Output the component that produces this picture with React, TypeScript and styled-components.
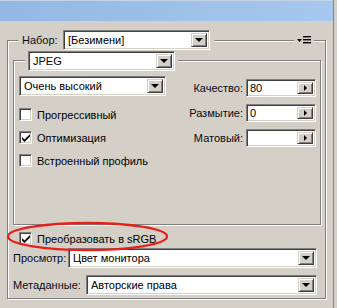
import React from "react";
import styled, { createGlobalStyle } from "styled-components";

const Global = createGlobalStyle`
  html, body { margin: 0; padding: 0; }
  body {
    width: 337px; height: 308px; overflow: hidden;
    background: #d4d0c8;
    font-family: "Liberation Sans", Arial, sans-serif;
    font-size: 11px; color: #000;
  }
`;

const Page = styled.div`
  display: flex;
  width: 337px;
  height: 308px;
  position: relative;
`;

const Main = styled.div`
  width: 333px;
  display: flex;
  flex-direction: column;
`;

const RightEdge = styled.div`
  width: 3px;
  border-left: 1px solid #8a8780;
  background: #d4d0c8;
`;

const TitleBar = styled.div`
  height: 21px;
  background: linear-gradient(90deg, #94b8e4 0%, #a6c8ee 100%);
  border-top: 1px solid #c4d4e6;
  box-sizing: border-box;
`;

const Group = styled.div<{ $mt: number; $ml: number; $w: number; $h: number }>`
  box-sizing: border-box;
  margin-top: ${(p) => p.$mt}px;
  margin-left: ${(p) => p.$ml}px;
  width: ${(p) => p.$w}px;
  height: ${(p) => p.$h}px;
  border: 1px solid #808080;
  box-shadow: inset 1px 1px 0 #fff, 1px 1px 0 #fff;
  display: flex;
  flex-direction: column;
  flex-shrink: 0;
`;

const GroupHead = styled.div<{ $mt: number; $pl: number; $pr: number }>`
  margin-top: ${(p) => p.$mt}px;
  padding: 0 ${(p) => p.$pr}px 0 ${(p) => p.$pl}px;
  display: flex;
  align-items: center;
  justify-content: space-between;
`;

const Mask = styled.div<{ $pl: number; $pr: number }>`
  background: #d4d0c8;
  display: flex;
  align-items: center;
  padding: 0 ${(p) => p.$pr}px 0 ${(p) => p.$pl}px;
  height: 20px;
`;

const Label = styled.span<{ $w?: number; $right?: boolean }>`
  display: inline-block;
  flex-shrink: 0;
  width: ${(p) => (p.$w ? `${p.$w}px` : "auto")};
  text-align: ${(p) => (p.$right ? "right" : "left")};
  white-space: nowrap;
  color: #0a0a14;
`;

const SelectBox = styled.div<{ $w: number }>`
  box-sizing: border-box;
  width: ${(p) => p.$w}px;
  height: 20px;
  background: #fff;
  border: 1px solid;
  border-color: #808080 #fff #fff #808080;
  box-shadow: inset 1px 1px 0 #404040, inset -1px -1px 0 #d4d0c8;
  display: flex;
  align-items: stretch;
  padding: 2px;
`;

const SelectText = styled.div`
  flex: 1;
  display: flex;
  align-items: center;
  padding-left: 2px;
  white-space: nowrap;
  overflow: hidden;
`;

const DropBtn = styled.div`
  box-sizing: border-box;
  width: 16px;
  background: #d4d0c8;
  border: 1px solid;
  border-color: #d4d0c8 #404040 #404040 #d4d0c8;
  box-shadow: inset 1px 1px 0 #fff, inset -1px -1px 0 #808080;
  display: flex;
  align-items: center;
  justify-content: center;
`;

const DownArrow = styled.div`
  width: 0; height: 0;
  border-left: 4px solid transparent;
  border-right: 4px solid transparent;
  border-top: 4px solid #000;
`;

const RightArrow = styled.div`
  width: 0; height: 0;
  border-top: 3px solid transparent;
  border-bottom: 3px solid transparent;
  border-left: 3px solid #000;
`;

const Body = styled.div<{ $pt: number; $pl: number; $pr: number }>`
  display: flex;
  padding: ${(p) => p.$pt}px ${(p) => p.$pr}px 0 ${(p) => p.$pl}px;
  justify-content: space-between;
`;

const Column = styled.div<{ $gap: number; $pt: number }>`
  display: flex;
  flex-direction: column;
  gap: ${(p) => p.$gap}px;
  padding-top: ${(p) => p.$pt}px;
`;

const CheckList = styled.div`
  display: flex;
  flex-direction: column;
  gap: 10px;
  margin-top: 12px;
`;

const CheckRow = styled.div`
  display: flex;
  align-items: center;
  gap: 5px;
  height: 13px;
  white-space: nowrap;
`;

const Check = styled.div`
  box-sizing: border-box;
  width: 13px;
  height: 13px;
  background: #fff;
  border: 1px solid;
  border-color: #808080 #fff #fff #808080;
  box-shadow: inset 1px 1px 0 #404040, inset -1px -1px 0 #d4d0c8;
  display: flex;
  align-items: center;
  justify-content: center;
`;

const FieldRow = styled.div`
  display: flex;
  align-items: center;
  gap: 3px;
`;

const Field = styled.div`
  box-sizing: border-box;
  width: 70px;
  height: 18px;
  background: #fff;
  border: 1px solid;
  border-color: #808080 #fff #fff #808080;
  box-shadow: inset 1px 1px 0 #404040, inset -1px -1px 0 #d4d0c8;
  display: flex;
  align-items: stretch;
  padding: 2px;
`;

const FieldText = styled.div`
  flex: 1;
  display: flex;
  align-items: center;
  padding-left: 1px;
`;

const SpinBtn = styled.div`
  box-sizing: border-box;
  width: 16px;
  background: #d4d0c8;
  border: 1px solid;
  border-color: #d4d0c8 #404040 #404040 #d4d0c8;
  box-shadow: inset 1px 1px 0 #fff, inset -1px -1px 0 #808080;
  display: flex;
  align-items: center;
  justify-content: center;
`;

const Lower = styled.div`
  display: flex;
  flex-direction: column;
  padding: 7px 8px 0 5px;
`;

const SrgbRow = styled(CheckRow)`
  margin-left: 6px;
`;

const LineRow = styled.div<{ $mt: number }>`
  display: flex;
  align-items: center;
  height: 20px;
  margin-top: ${(p) => p.$mt}px;
`;

const MenuIcon = styled.svg`
  display: block;
`;

const Ellipse = styled.svg`
  position: absolute;
  left: 0;
  top: 0;
  pointer-events: none;
`;

const CheckMark = () => (
  <svg width="8" height="8" viewBox="0 0 8 8">
    <path d="M0 3 L0 5.5 L2.5 8 L8 2.5 L8 0 L2.5 5.5 Z" fill="#000" />
  </svg>
);

const Select = ({ w, text }: { w: number; text: string }) => (
  <SelectBox $w={w}>
    <SelectText>{text}</SelectText>
    <DropBtn>
      <DownArrow />
    </DropBtn>
  </SelectBox>
);

const Spin = ({ label, value }: { label: string; value: string }) => (
  <FieldRow>
    <Label $w={60} $right>
      {label}
    </Label>
    <Field>
      <FieldText>{value}</FieldText>
      <SpinBtn>
        <RightArrow />
      </SpinBtn>
    </Field>
  </FieldRow>
);

const CheckItem = ({ label, on }: { label: string; on?: boolean }) => (
  <CheckRow>
    <Check>{on && <CheckMark />}</Check>
    <span>{label}</span>
  </CheckRow>
);

export default function App() {
  return (
    <>
      <Global />
      <Page>
        <Main>
          <TitleBar />
          <Group $mt={19} $ml={7} $w={319} $h={259}>
            <GroupHead $mt={-11} $pl={10} $pr={11}>
              <Mask $pl={4} $pr={4}>
                <Label $w={41}>Набор:</Label>
                <Select w={147} text="[Безимени]" />
              </Mask>
              <Mask $pl={3} $pr={3}>
                <MenuIcon width="14" height="8" viewBox="0 0 14 8">
                  <path d="M0 3 L5 3 L2.5 6 Z" fill="#000" />
                  <rect x="6" y="0" width="8" height="1.4" fill="#000" />
                  <rect x="6" y="3" width="8" height="1.4" fill="#000" />
                  <rect x="6" y="6" width="8" height="1.4" fill="#000" />
                </MenuIcon>
              </Mask>
            </GroupHead>
            <Group $mt={10} $ml={5} $w={308} $h={165}>
              <GroupHead $mt={-10} $pl={11} $pr={0}>
                <Mask $pl={3} $pr={3}>
                  <Select w={147} text="JPEG" />
                </Mask>
              </GroupHead>
              <Body $pt={5} $pl={5} $pr={4}>
                <Column $gap={0} $pt={0}>
                  <Select w={147} text="Очень высокий" />
                  <CheckList>
                    <CheckItem label="Прогрессивный" />
                    <CheckItem label="Оптимизация" on />
                    <CheckItem label="Встроенный профиль" />
                  </CheckList>
                </Column>
                <Column $gap={7} $pt={3}>
                  <Spin label="Качество:" value="80" />
                  <Spin label="Размытие:" value="0" />
                  <Spin label="Матовый:" value="" />
                </Column>
              </Body>
            </Group>
            <Lower>
              <SrgbRow>
                <Check>
                  <CheckMark />
                </Check>
                <span>Преобразовать в sRGB</span>
              </SrgbRow>
              <LineRow $mt={3}>
                <Label $w={55}>Просмотр:</Label>
                <Select w={249} text="Цвет монитора" />
              </LineRow>
              <LineRow $mt={7}>
                <Label $w={73}>Метаданные:</Label>
                <Select w={231} text="Авторские права" />
              </LineRow>
            </Lower>
          </Group>
        </Main>
        <RightEdge />
        <Ellipse width="337" height="308">
          <ellipse cx="87.5" cy="236.5" rx="79.5" ry="13.5" fill="none" stroke="#e8201b" strokeWidth="2.3" />
        </Ellipse>
      </Page>
    </>
  );
}
